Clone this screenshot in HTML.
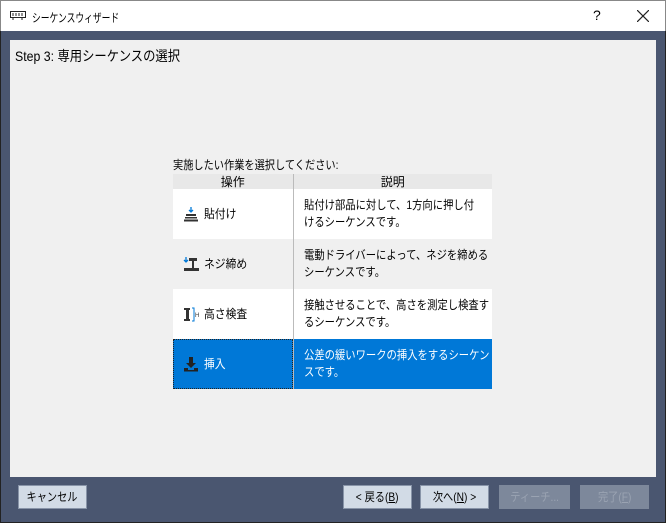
<!DOCTYPE html>
<html><head><meta charset="utf-8"><style>
*{margin:0;padding:0;box-sizing:border-box}
body{width:666px;height:523px;position:relative;overflow:hidden;background:#4a5670;font-family:"Liberation Sans","Noto Sans CJK JP",sans-serif;font-size:12px;color:#000}
.sx{display:inline-block;white-space:nowrap;transform-origin:left center}
.title{position:absolute;left:0;top:0;width:666px;height:31px;background:#fff;border:1px solid #888;border-bottom:none}
.title .t{position:absolute;left:31px;top:8px;font-size:12px}
.frame{position:absolute;left:0;top:31px;width:666px;height:492px;border:1px solid #222;border-top:none}
.panel{position:absolute;left:10px;top:40px;width:646px;height:437px;background:#f0f0f0}
.step{position:absolute;left:15px;top:46px;font-size:14px}
.lbl{position:absolute;left:173px;top:156px}
table{position:absolute;left:173px;top:174px;border-collapse:collapse;width:319px;table-layout:fixed}
th{height:15px;background:#e8e8e8;font-weight:normal;font-size:12px;line-height:14px;border-right:1px solid #bbb}
th.c1{width:120px}
td{height:50px;vertical-align:middle;font-size:12px;line-height:17px;overflow:hidden}
td.a{padding-left:10px;border-right:1px solid #bbb}
td.b{padding-left:10px}
tr.w td{background:#fff}
tr.g td{background:#f0f0f0}
tr.s td{background:#0078d7;color:#fff}
tr.s td.a{outline:1px dotted #222;outline-offset:-1px}
.ic{display:inline-block;width:16px;height:16px;vertical-align:middle;margin-right:5px}
.btn{position:absolute;top:485px;height:24px;background:#d2dbe6;border:1px solid #8894a8;text-align:center;line-height:22px;font-size:12px}
.btn span{display:inline-block;transform:scaleX(.85);white-space:nowrap}
.dis{background:#7d889b;color:#9aa3b2;border-color:#7d889b}
</style></head><body>
<div class="title">
<svg style="position:absolute;left:9px;top:10px" width="16" height="10"><rect x="0.5" y="0.5" width="15" height="6" fill="none" stroke="#222"/><path d="M3 2v3M6 2v3M9 2v3M12 2v3M3 7v2M12 7v2" stroke="#222"/></svg>
<div class="t"><span class="sx" style="transform:scaleX(.73)">シーケンスウィザード</span></div>
<div style="position:absolute;left:592px;top:6px;font-size:14px">?</div>
<svg style="position:absolute;left:636px;top:9px" width="12" height="12"><path d="M0 0L12 12M12 0L0 12" stroke="#222" stroke-width="1.2"/></svg>
</div>
<div class="frame"></div>
<div class="panel"></div>
<div class="step"><span class="sx" style="transform:scaleX(.88)">Step 3: 専用シーケンスの選択</span></div>
<div class="lbl"><span class="sx" style="transform:scaleX(.85)">実施したい作業を選択してください:</span></div>
<table>
<tr><th class="c1">操作</th><th style="border-right:none">説明</th></tr>
<tr class="w"><td class="a"><svg class="ic" viewBox="0 0 16 16"><path d="M8 1v5M6 4l2 2 2-2" stroke="#0078d7" fill="none" stroke-width="1.3"/><rect x="3" y="8" width="10" height="2" fill="#333"/><rect x="2" y="11" width="12" height="1.5" fill="#333"/><rect x="1" y="13.5" width="14" height="2" fill="#333"/></svg><span class="sx" style="transform:scaleX(.9)">貼付け</span></td><td class="b"><span class="sx" style="transform:scaleX(.86)">貼付け部品に対して、1方向に押し付<br>けるシーケンスです。</span></td></tr>
<tr class="g"><td class="a"><svg class="ic" viewBox="0 0 16 16"><path d="M3 1v5M1 4l2 2 2-2" stroke="#0078d7" fill="none" stroke-width="1.3"/><rect x="6" y="2" width="8" height="3" fill="#333"/><rect x="9" y="5" width="2" height="7" fill="#333"/><rect x="1" y="12" width="15" height="3" fill="#333"/></svg><span class="sx" style="transform:scaleX(.9)">ネジ締め</span></td><td class="b"><span class="sx" style="transform:scaleX(.86)">電動ドライバーによって、ネジを締める<br>シーケンスです。</span></td></tr>
<tr class="w"><td class="a"><svg class="ic" viewBox="0 0 16 16"><rect x="1" y="2" width="6" height="2" fill="#333"/><rect x="3" y="4" width="3" height="9" fill="#333"/><rect x="1" y="13" width="6" height="2" fill="#333"/><path d="M9 2h2v13h-2" stroke="#0078d7" fill="none"/><text x="12" y="11" font-size="6" fill="#333">H</text></svg><span class="sx" style="transform:scaleX(.9)">高さ検査</span></td><td class="b"><span class="sx" style="transform:scaleX(.86)">接触させることで、高さを測定し検査す<br>るシーケンスです。</span></td></tr>
<tr class="s"><td class="a"><svg class="ic" viewBox="0 0 16 16"><rect x="6" y="1" width="4" height="7" fill="#222"/><path d="M3 7l5 5 5-5z" fill="#222"/><rect x="1" y="12" width="4" height="3" fill="#222"/><rect x="11" y="12" width="4" height="3" fill="#222"/><rect x="1" y="14" width="14" height="1.5" fill="#222"/></svg><span class="sx" style="transform:scaleX(.9)">挿入</span></td><td class="b"><span class="sx" style="transform:scaleX(.86)">公差の緩いワークの挿入をするシーケン<br>スです。</span></td></tr>
</table>
<div class="btn" style="left:18px;width:69px"><span>キャンセル</span></div>
<div class="btn" style="left:343px;width:69px"><span>&lt; 戻る(<u>B</u>)</span></div>
<div class="btn" style="left:420px;width:69px"><span>次へ(<u>N</u>) &gt;</span></div>
<div class="btn dis" style="left:499px;width:71px"><span>ティーチ...</span></div>
<div class="btn dis" style="left:580px;width:69px"><span>完了(<u>F</u>)</span></div>
</body></html>
